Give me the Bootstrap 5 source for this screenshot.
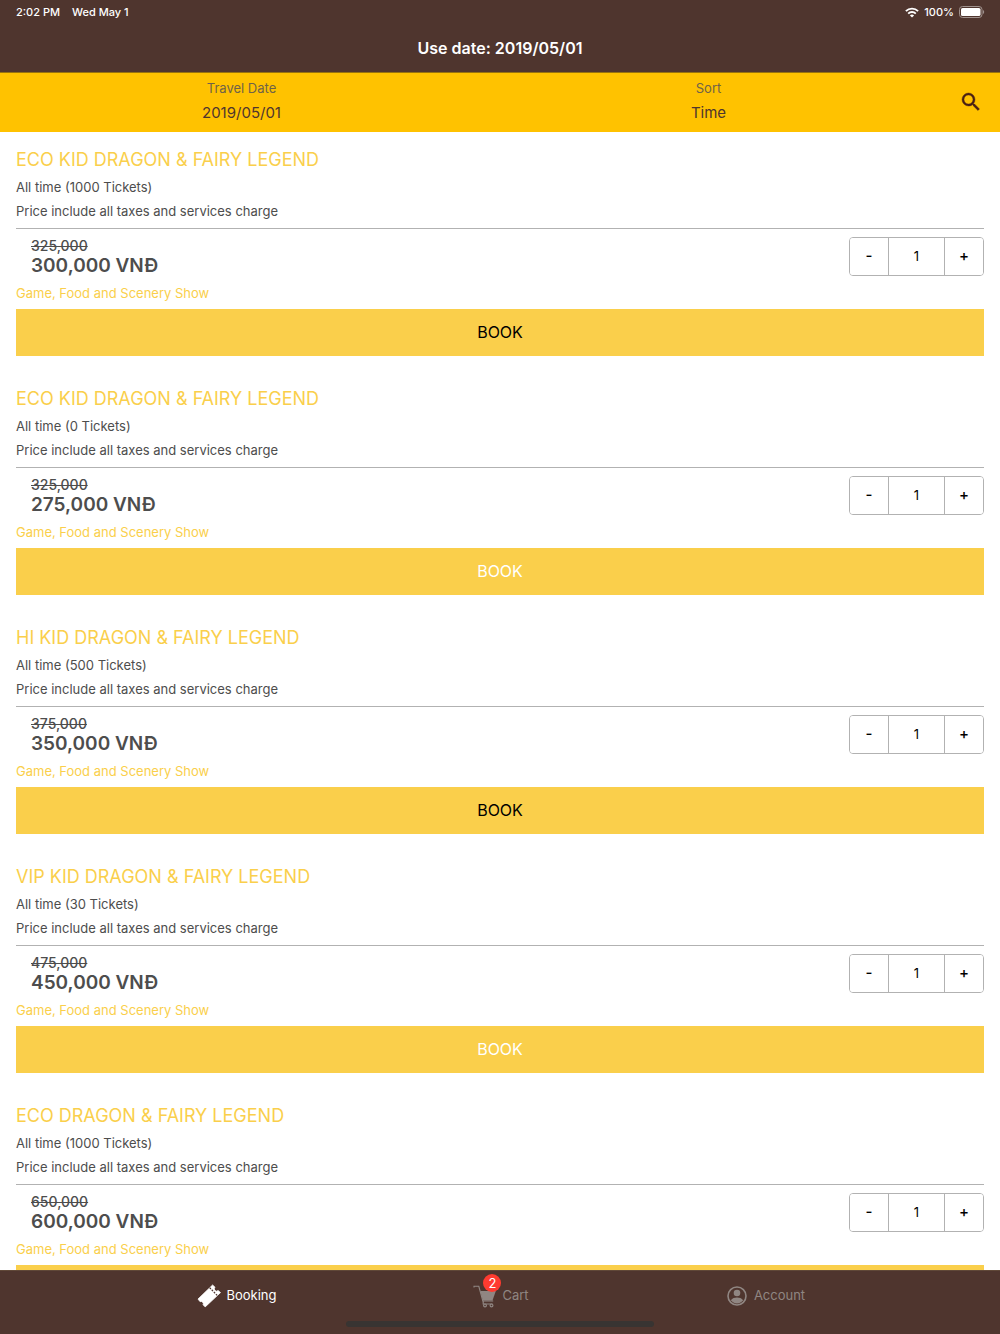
<!DOCTYPE html>
<html lang="en">
<head>
<meta charset="utf-8">
<meta name="viewport" content="width=device-width, initial-scale=1">
<title>Use date: 2019/05/01</title>
<link href="https://cdn.jsdelivr.net/npm/bootstrap@5.3.0/dist/css/bootstrap.min.css" rel="stylesheet">
<style>
:root { --brown: #4f352e; --amber: #ffc200; --gold: #facf4b; --ink: #4d4d4d; --rule: #b2b2b2; }
body { font-family: Inter, "Liberation Sans", sans-serif; font-size: 13px; color: var(--ink); background: #fff; }
button, input, select { font-family: inherit; }
.bg-brown { background: var(--brown); }
.status-line { height: 24px; font-size: 11px; font-weight: 500; padding: 0 15px 0 16px; }
.status-start { gap: 12px; }
.status-end { gap: 5px; }
.screen-title { height: 48px; font-size: 16px; line-height: 48px; font-weight: 600; }
.filter-bar { height: 60px; background: var(--amber); padding-left: 8px; box-shadow: inset 0 1px #98730f; }
.filter-label { line-height: 20px; color: #6f6248; padding-top: 6px; }
.filter-value { appearance: none; border: 0; padding: 0; margin-top: 4px; height: 22px; background: transparent; font-size: 15px; line-height: 22px; color: var(--brown); text-align: center; text-align-last: center; }
.search-btn { width: 58px; border: 0; background: transparent; color: #4a2014; }
.ticket-list { overflow-y: auto; scrollbar-width: none; }
.ticket-list::-webkit-scrollbar { display: none; }
.ticket { padding: 16px 16px 15px; }
.ticket-name { font-size: 18px; line-height: 24px; font-weight: 400; color: var(--gold); margin: 0 0 3px; }
.ticket-info { line-height: 24px; margin: 0; }
.ticket-price { border-top: 1px solid var(--rule); margin-top: 5px; padding: 8px 0 0 15px; }
.price-old { font-size: 14px; line-height: 18px; font-weight: 500; }
.price-now { font-size: 19px; line-height: 21px; font-weight: 600; }
.stepper { height: 39px; width: 135px; border: 1px solid var(--rule); border-radius: 4px; overflow: hidden; }
.stepper button { width: 38px; border: 0; padding: 0; background: #fff; color: #000; font-size: 15px; font-weight: 500; }
.stepper input { min-width: 0; flex: 1; border: solid var(--rule); border-width: 0 1px; padding: 0; color: #000; font-size: 13px; text-align: center; }
.ticket-kind { line-height: 22px; color: var(--gold); margin: 6px 0 5px; }
.book-btn { height: 47px; border: 0; padding: 0 0 2px; background: var(--gold); color: #000; font-size: 16px; }
.book-btn:disabled { color: #fff; }
.tab-bar { height: 64px; padding: 0 103px 0 105px; border-top: 1px solid #604838; }
.tab-link { height: 50px; gap: 5px; color: #908682; text-decoration: none; }
.tab-link.is-current { color: #fff; }
.tab-icon { width: 24px; height: 24px; }
.cart-count { top: -10px; left: 10px; width: 18px; height: 18px; border-radius: 9px; background: #ff3b30; color: #fff; line-height: 18px; }
.home-bar { left: 50%; bottom: 7px; width: 308px; height: 6px; margin-left: -154px; border-radius: 3px; background: #383432; }
</style>
<script src="https://cdn.jsdelivr.net/npm/bootstrap@5.3.0/dist/js/bootstrap.bundle.min.js"></script>
</head>
<body class="d-flex flex-column vh-100 overflow-hidden">
<header class="bg-brown text-white flex-shrink-0">
  <div class="status-line d-flex justify-content-between align-items-center">
    <div class="status-start d-flex"><span>2:02 PM</span><span>Wed May 1</span></div>
    <div class="status-end d-flex align-items-center">
      <svg width="14" height="11" viewBox="0 0 14 11" aria-hidden="true"><g fill="none" stroke="#fff" stroke-width="1.9"><path d="M.9 4.1a8.7 8.7 0 0 1 12.2 0"/><path d="M3.2 6.6a5.4 5.4 0 0 1 7.6 0"/></g><path fill="#fff" d="M7 10.6 4.9 8.5a3 3 0 0 1 4.2 0z"/></svg>
      <span>100%</span>
      <svg width="26" height="12" viewBox="0 0 26 12" aria-hidden="true"><rect x=".5" y=".5" width="22.5" height="11" rx="3" fill="none" stroke="#a0928d"/><rect x="2" y="2" width="19.5" height="8" rx="1.6" fill="#fff"/><path d="M24 4v4c1.6-.6 1.6-3.4 0-4z" fill="#a0928d"/></svg>
    </div>
  </div>
  <h1 class="screen-title text-center m-0">Use date: 2019/05/01</h1>
</header>

<section class="filter-bar d-flex flex-shrink-0" aria-label="Filters">
  <div class="flex-fill d-flex flex-column text-center w-50">
    <label class="filter-label" for="travel-date">Travel Date</label>
    <input class="filter-value" id="travel-date" type="text" value="2019/05/01" readonly>
  </div>
  <div class="flex-fill d-flex flex-column text-center w-50">
    <label class="filter-label" for="sort-by">Sort</label>
    <select class="filter-value" id="sort-by"><option>Time</option></select>
  </div>
  <button class="search-btn flex-shrink-0 p-0" type="button" aria-label="Search">
    <svg width="24" height="24" viewBox="0 0 24 24" fill="currentColor" aria-hidden="true"><path stroke="currentColor" stroke-width=".4" d="M15.5 14h-.79l-.28-.27A6.47 6.47 0 0 0 16 9.5 6.5 6.5 0 1 0 9.5 16c1.61 0 3.09-.59 4.23-1.57l.27.28v.79l5 4.99L20.49 19l-4.99-5zm-6 0C7.01 14 5 11.99 5 9.5S7.01 5 9.5 5 14 7.01 14 9.5 11.99 14 9.5 14z"/></svg>
  </button>
</section>

<main class="ticket-list flex-grow-1">
  <article class="ticket">
    <h2 class="ticket-name">ECO KID DRAGON &amp; FAIRY LEGEND</h2>
    <p class="ticket-info">All time (1000 Tickets)</p>
    <p class="ticket-info">Price include all taxes and services charge</p>
    <div class="ticket-price d-flex justify-content-between">
      <div><div class="price-old"><s>325,000</s></div><div class="price-now">300,000 VNĐ</div></div>
      <div class="stepper d-flex"><button type="button" aria-label="Fewer">-</button><input type="text" inputmode="numeric" value="1" aria-label="Quantity"><button type="button" aria-label="More">+</button></div>
    </div>
    <p class="ticket-kind">Game, Food and Scenery Show</p>
    <button class="book-btn d-block w-100" type="button">BOOK</button>
  </article>
  <article class="ticket">
    <h2 class="ticket-name">ECO KID DRAGON &amp; FAIRY LEGEND</h2>
    <p class="ticket-info">All time (0 Tickets)</p>
    <p class="ticket-info">Price include all taxes and services charge</p>
    <div class="ticket-price d-flex justify-content-between">
      <div><div class="price-old"><s>325,000</s></div><div class="price-now">275,000 VNĐ</div></div>
      <div class="stepper d-flex"><button type="button" aria-label="Fewer">-</button><input type="text" inputmode="numeric" value="1" aria-label="Quantity"><button type="button" aria-label="More">+</button></div>
    </div>
    <p class="ticket-kind">Game, Food and Scenery Show</p>
    <button class="book-btn d-block w-100" type="button" disabled>BOOK</button>
  </article>
  <article class="ticket">
    <h2 class="ticket-name">HI KID DRAGON &amp; FAIRY LEGEND</h2>
    <p class="ticket-info">All time (500 Tickets)</p>
    <p class="ticket-info">Price include all taxes and services charge</p>
    <div class="ticket-price d-flex justify-content-between">
      <div><div class="price-old"><s>375,000</s></div><div class="price-now">350,000 VNĐ</div></div>
      <div class="stepper d-flex"><button type="button" aria-label="Fewer">-</button><input type="text" inputmode="numeric" value="1" aria-label="Quantity"><button type="button" aria-label="More">+</button></div>
    </div>
    <p class="ticket-kind">Game, Food and Scenery Show</p>
    <button class="book-btn d-block w-100" type="button">BOOK</button>
  </article>
  <article class="ticket">
    <h2 class="ticket-name">VIP KID DRAGON &amp; FAIRY LEGEND</h2>
    <p class="ticket-info">All time (30 Tickets)</p>
    <p class="ticket-info">Price include all taxes and services charge</p>
    <div class="ticket-price d-flex justify-content-between">
      <div><div class="price-old"><s>475,000</s></div><div class="price-now">450,000 VNĐ</div></div>
      <div class="stepper d-flex"><button type="button" aria-label="Fewer">-</button><input type="text" inputmode="numeric" value="1" aria-label="Quantity"><button type="button" aria-label="More">+</button></div>
    </div>
    <p class="ticket-kind">Game, Food and Scenery Show</p>
    <button class="book-btn d-block w-100" type="button" disabled>BOOK</button>
  </article>
  <article class="ticket">
    <h2 class="ticket-name">ECO DRAGON &amp; FAIRY LEGEND</h2>
    <p class="ticket-info">All time (1000 Tickets)</p>
    <p class="ticket-info">Price include all taxes and services charge</p>
    <div class="ticket-price d-flex justify-content-between">
      <div><div class="price-old"><s>650,000</s></div><div class="price-now">600,000 VNĐ</div></div>
      <div class="stepper d-flex"><button type="button" aria-label="Fewer">-</button><input type="text" inputmode="numeric" value="1" aria-label="Quantity"><button type="button" aria-label="More">+</button></div>
    </div>
    <p class="ticket-kind">Game, Food and Scenery Show</p>
    <button class="book-btn d-block w-100" type="button" aria-label="Book"></button>
  </article>
</main>

<nav class="tab-bar bg-brown d-flex position-relative flex-shrink-0" aria-label="Main">
  <a class="tab-link is-current flex-fill w-100 d-flex justify-content-center align-items-center" href="#booking" aria-current="page">
    <svg class="tab-icon" viewBox="0 0 24 24" aria-hidden="true"><path fill="#fff" stroke="#fff" stroke-width=".8" stroke-linejoin="round" d="M15.6 1 18 3.3a2.2 2.2 0 0 0 3.1 3.2L23.5 8.6 8.2 22.9 6.1 20.8a2.3 2.3 0 0 0-3-3.1L1 15.1z"/><path d="m12.6 3.6 7.6 7.8" stroke="#4f352e" stroke-width="1.2" stroke-dasharray="1.9 1.1"/></svg>
    <span>Booking</span>
  </a>
  <a class="tab-link flex-fill w-100 d-flex justify-content-center align-items-center" href="#cart">
    <span class="position-relative d-flex">
      <svg class="tab-icon" viewBox="0 0 24 24" aria-hidden="true"><path d="M1 3.500V2.300h4.800l4 14.700h10.400" fill="none" stroke="currentColor" stroke-width="1.100"/><path d="M7.300 7h15.500l-3.300 9.500H9.900z" fill="currentColor"/><g fill="none" stroke="currentColor" stroke-width="1.200"><path d="M10.200 17v3h9.300"/><circle cx="12" cy="21.400" r="1.400"/><circle cx="18.500" cy="21.400" r="1.400"/></g></svg>
      <span class="cart-count position-absolute text-center">2</span>
    </span>
    <span>Cart</span>
  </a>
  <a class="tab-link flex-fill w-100 d-flex justify-content-center align-items-center" href="#account">
    <svg class="tab-icon" viewBox="0 0 24 24" aria-hidden="true"><circle cx="12" cy="12" r="9" fill="none" stroke="currentColor" stroke-width="1.6"/><circle cx="12" cy="9" r="3.3" fill="currentColor"/><path d="M5.800 16.300c1.500-2 3.800-2.700 6.200-2.700s4.700.7 6.200 2.700A7.600 7.600 0 0 1 12 19.400a7.600 7.600 0 0 1-6.200-3.100z" fill="currentColor"/></svg>
    <span>Account</span>
  </a>
  <div class="home-bar position-absolute"></div>
</nav>
</body>
</html>
